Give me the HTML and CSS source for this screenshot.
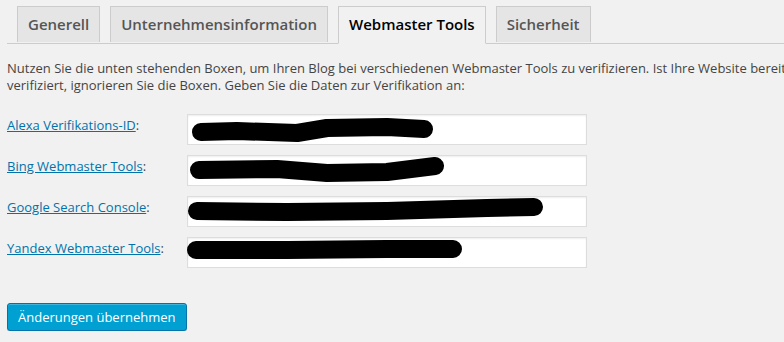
FILE: index.html
```html
<!DOCTYPE html>
<html lang="de">
<head>
  <meta charset="UTF-8" />
  <title>Webmaster Tools</title>
  <link rel="stylesheet" href="styles.css">
</head>
<body>
  <div class="wrap">
    <div class="nav-tabs">
      <a class="nav-tab" href="#">Generell</a>
      <a class="nav-tab" href="#">Unternehmensinformation</a>
      <a class="nav-tab nav-tab-active" href="#">Webmaster Tools</a>
      <a class="nav-tab" href="#">Sicherheit</a>
    </div>

    <p class="intro">Nutzen Sie die unten stehenden Boxen, um Ihren Blog bei verschiedenen Webmaster Tools zu verifizieren. Ist Ihre Website bereits verifiziert, ignorieren Sie die Boxen. Geben Sie die Daten zur Verifikation an:</p>

    <div class="form-table">
      <label class="field-label"><a href="#">Alexa Verifikations-ID</a>:</label>
      <div class="field">
        <input class="regular-text" type="text">
        <svg class="scribble" viewBox="0 0 400 31"><polyline points="14,18 50,17 110,19 140,14 200,13 237,15"/></svg>
      </div>

      <label class="field-label"><a href="#">Bing Webmaster Tools</a>:</label>
      <div class="field">
        <input class="regular-text" type="text">
        <svg class="scribble" viewBox="0 0 400 31"><polyline points="12,15 90,14 140,18 200,17 248,11"/></svg>
      </div>

      <label class="field-label"><a href="#">Google Search Console</a>:</label>
      <div class="field">
        <input class="regular-text" type="text">
        <svg class="scribble" viewBox="0 0 400 31"><polyline points="10,15 100,16 200,15 300,12 347,11"/></svg>
      </div>

      <label class="field-label"><a href="#">Yandex Webmaster Tools</a>:</label>
      <div class="field">
        <input class="regular-text" type="text">
        <svg class="scribble" viewBox="0 0 400 31"><polyline points="9,13 100,13 200,12 266,12"/></svg>
      </div>
    </div>

    <button class="button-primary" type="button">Änderungen übernehmen</button>
  </div>
</body>
</html>
```

FILE: styles.css
```css
html, body {
  margin: 0;
  padding: 0;
  overflow: hidden;
}

body {
  background: #f1f1f1;
  color: #444;
  font-family: "Open Sans", sans-serif;
  font-size: 13px;
}

.wrap {
  width: 820px;
  padding: 6px 0 0 7px;
}

.nav-tabs {
  display: flex;
  gap: 10px;
  padding-left: 10px;
  border-bottom: 1px solid #ccc;
}

.nav-tab {
  display: block;
  height: 35px;
  line-height: 34px;
  padding: 0 10px;
  margin-bottom: -1px;
  border: 1px solid #ccc;
  border-bottom: none;
  background: #e5e5e5;
  color: #555;
  font-size: 15px;
  font-weight: 600;
  text-decoration: none;
}

.nav-tab-active {
  background: #f1f1f1;
  color: #000;
  height: 36px;
  border-bottom: 1px solid #f1f1f1;
}

.intro {
  margin: 16px 0 0;
  line-height: 17px;
  width: 800px;
}

.form-table {
  display: grid;
  grid-template-columns: 180px 400px;
  row-gap: 10px;
  margin-top: 20px;
}

.field-label {
  padding-top: 2px;
  line-height: 18px;
}

.field-label a {
  color: #0073aa;
  text-decoration: underline;
}

.field {
  position: relative;
  height: 31px;
}

.regular-text {
  display: block;
  box-sizing: border-box;
  width: 400px;
  height: 31px;
  margin: 0;
  border: 1px solid #ddd;
  background: #fff;
  box-shadow: inset 0 1px 2px rgba(0, 0, 0, 0.07);
}

/* redaction marks drawn over the field values */
.scribble {
  position: absolute;
  left: 0;
  top: 0;
  width: 400px;
  height: 31px;
}

.scribble polyline {
  fill: none;
  stroke: #000;
  stroke-width: 18;
  stroke-linecap: round;
  stroke-linejoin: round;
}

.button-primary {
  display: block;
  margin-top: 35px;
  height: 28px;
  padding: 0 10px 1px;
  border: 1px solid #0073aa;
  border-radius: 3px;
  background: #00a0d2;
  box-shadow: inset 0 1px 0 rgba(120, 200, 230, 0.5), 0 1px 0 rgba(0, 0, 0, 0.15);
  color: #fff;
  font-family: "Open Sans", sans-serif;
  font-size: 13px;
}
```
